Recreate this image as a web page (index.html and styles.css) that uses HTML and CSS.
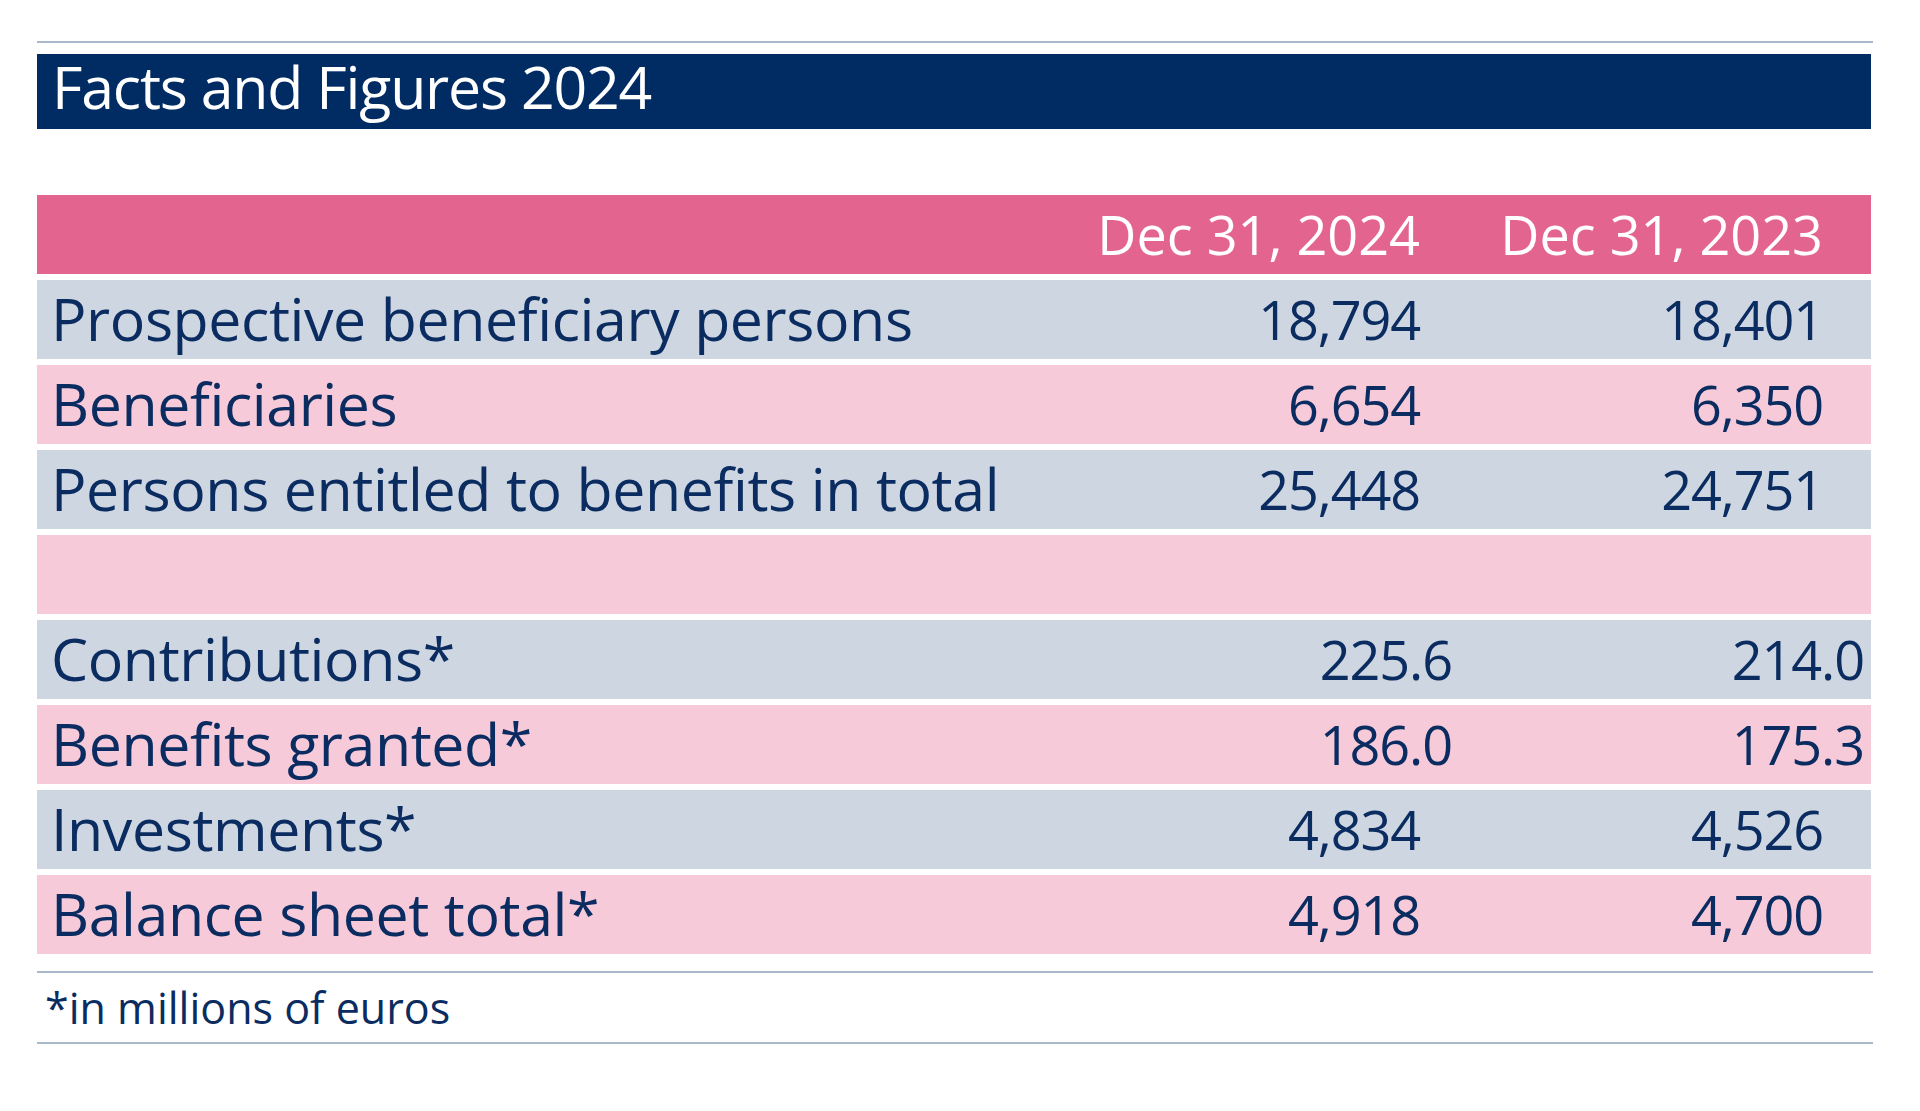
FILE: index.html
```html
<!DOCTYPE html>
<html lang="en">
<head>
<meta charset="utf-8">
<title>Facts and Figures 2024</title>
<link rel="stylesheet" href="styles.css">
</head>
<body>
<div class="sheet">
  <h1 class="title">Facts and Figures 2024</h1>
  <div class="table">
    <div class="row head">
      <div class="label"></div>
      <div class="v1">Dec 31, 2024</div>
      <div class="v2">Dec 31, 2023</div>
    </div>
    <div class="row gray">
      <div class="label">Prospective beneficiary persons</div>
      <div class="v1">18,794</div>
      <div class="v2">18,401</div>
    </div>
    <div class="row pink">
      <div class="label">Beneficiaries</div>
      <div class="v1">6,654</div>
      <div class="v2">6,350</div>
    </div>
    <div class="row gray">
      <div class="label">Persons entitled to benefits in total</div>
      <div class="v1">25,448</div>
      <div class="v2">24,751</div>
    </div>
    <div class="row pink">
      <div class="label"></div>
      <div class="v1"></div>
      <div class="v2"></div>
    </div>
    <div class="row gray money">
      <div class="label">Contributions*</div>
      <div class="v1">225.6</div>
      <div class="v2">214.0</div>
    </div>
    <div class="row pink money">
      <div class="label">Benefits granted*</div>
      <div class="v1">186.0</div>
      <div class="v2">175.3</div>
    </div>
    <div class="row gray">
      <div class="label">Investments*</div>
      <div class="v1">4,834</div>
      <div class="v2">4,526</div>
    </div>
    <div class="row pink">
      <div class="label">Balance sheet total*</div>
      <div class="v1">4,918</div>
      <div class="v2">4,700</div>
    </div>
  </div>
  <p class="footnote">*in millions of euros</p>
</div>
</body>
</html>
```
FILE: styles.css
```css
html, body {
  margin: 0;
  padding: 0;
  background: #ffffff;
}

body {
  font-family: "Open Sans", "Noto Sans", sans-serif;
  color: #0b2c60;
}

.sheet {
  margin: 41px 0 0 37px;
  width: 1836px;
  border-top: 2px solid #a9b9cb;
}

.title {
  margin: 11px 2px 0 0;
  box-sizing: border-box;
  height: 75px;
  padding: 0 0 10px 15px;
  background: #002c63;
  color: #ffffff;
  font-size: 59px;
  font-weight: 400;
  letter-spacing: -1.2px;
  line-height: 65px;
  white-space: nowrap;
}

.table {
  margin: 66px 2px 0 0;
  display: flex;
  flex-direction: column;
  gap: 6px;
}

.row {
  display: grid;
  grid-template-columns: 1fr 400px 403px;
  padding-right: 48px;
  height: 79px;
  line-height: 79px;
  white-space: nowrap;
}

.row.head {
  background: #e3648f;
  color: #ffffff;
}

.row.head .v1,
.row.head .v2 {
  letter-spacing: 0;
}

.row.gray {
  background: #ced6e1;
}

.row.pink {
  background: #f6cad9;
}

.label {
  padding-left: 14px;
  font-size: 59px;
  letter-spacing: -0.4px;
  line-height: 76px;
}

.v1, .v2 {
  text-align: right;
  font-size: 54px;
  letter-spacing: -1.1px;
}

.row.money .v1 {
  margin-right: -32px;
}

.row.money .v2 {
  margin-right: -41px;
}

.footnote {
  margin: 17px 0 0 0;
  padding: 5px 0 4px 8px;
  border-top: 2px solid #a9b9cb;
  border-bottom: 2px solid #a9b9cb;
  font-size: 43px;
  line-height: 60px;
  white-space: nowrap;
}
```
